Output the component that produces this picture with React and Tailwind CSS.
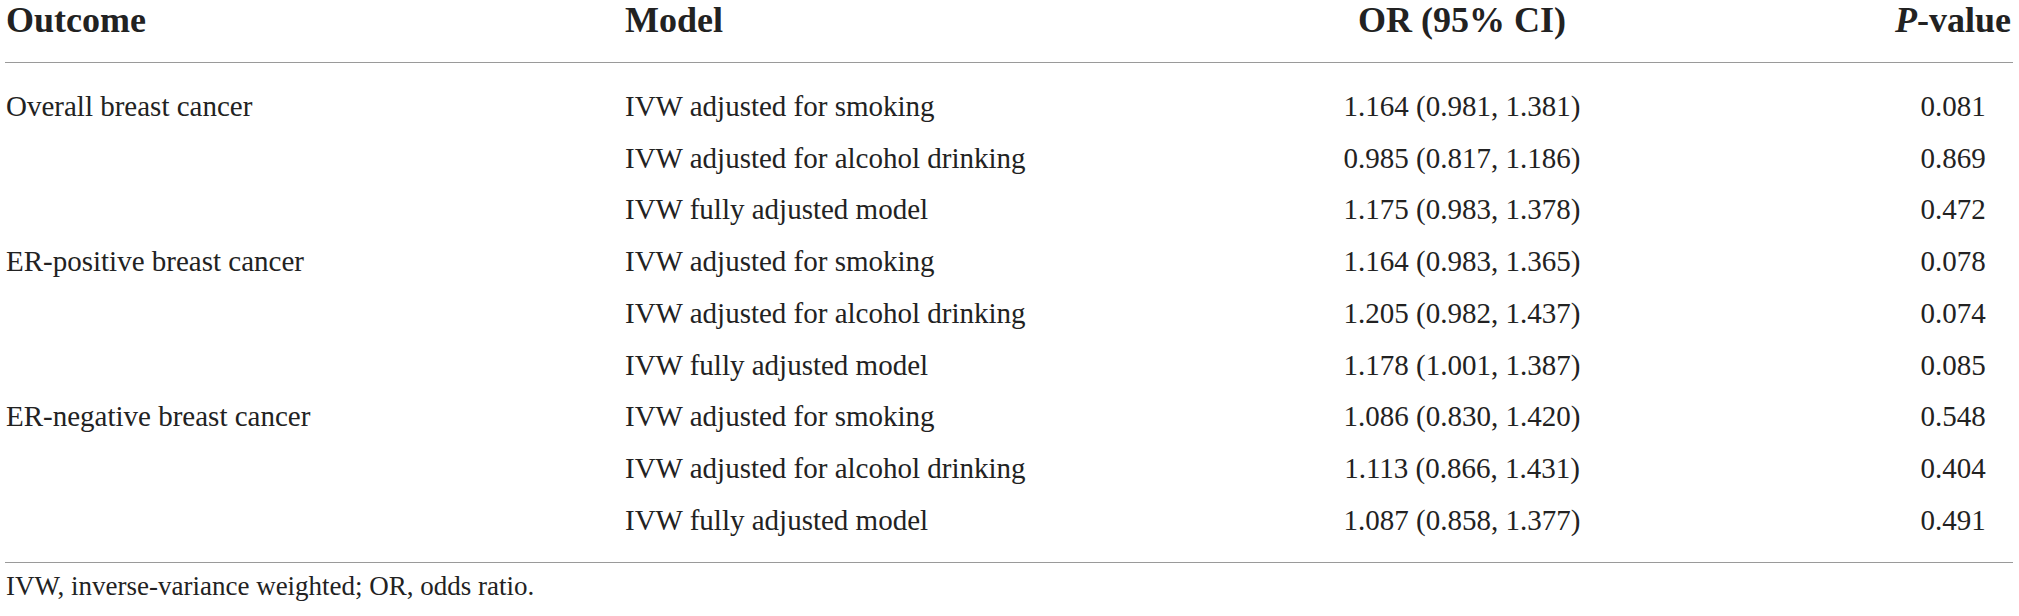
const rows = [
    { outcome: "Overall breast cancer", model: "IVW adjusted for smoking", or: "1.164 (0.981, 1.381)", p: "0.081" },
    { outcome: "", model: "IVW adjusted for alcohol drinking", or: "0.985 (0.817, 1.186)", p: "0.869" },
    { outcome: "", model: "IVW fully adjusted model", or: "1.175 (0.983, 1.378)", p: "0.472" },
    { outcome: "ER-positive breast cancer", model: "IVW adjusted for smoking", or: "1.164 (0.983, 1.365)", p: "0.078" },
    { outcome: "", model: "IVW adjusted for alcohol drinking", or: "1.205 (0.982, 1.437)", p: "0.074" },
    { outcome: "", model: "IVW fully adjusted model", or: "1.178 (1.001, 1.387)", p: "0.085" },
    { outcome: "ER-negative breast cancer", model: "IVW adjusted for smoking", or: "1.086 (0.830, 1.420)", p: "0.548" },
    { outcome: "", model: "IVW adjusted for alcohol drinking", or: "1.113 (0.866, 1.431)", p: "0.404" },
    { outcome: "", model: "IVW fully adjusted model", or: "1.087 (0.858, 1.377)", p: "0.491" },
];

const cols = "grid grid-cols-[619px_638px_400px_351px]";

function App() {
    return (
        <div className="w-[2019px] h-[616px] bg-white text-[#222] font-['Liberation_Serif',serif] overflow-hidden">
            <div className="ml-[5px] w-[2008px]">
                <div className={`${cols} text-[36px] leading-[40px] font-bold pb-[22px] border-b border-[#9a9a9a]`}>
                    <div className="pl-[1px]">Outcome</div>
                    <div className="pl-[1px]">Model</div>
                    <div className="text-center">OR (95% CI)</div>
                    <div className="pl-[231px] text-center">
                        <i>P</i>-value
                    </div>
                </div>
                <div className="pt-[18px] pb-[16px] border-b border-[#9a9a9a] text-[29px] leading-[51.7px]">
                    {rows.map((r, i) => (
                        <div key={i} className={cols}>
                            <div className="pl-[1px]">{r.outcome}</div>
                            <div className="pl-[1px]">{r.model}</div>
                            <div className="text-center">{r.or}</div>
                            <div className="pl-[231px] text-center">{r.p}</div>
                        </div>
                    ))}
                </div>
                <p className="mt-[5px] pl-[1px] text-[27px] leading-[36px]">
                    IVW, inverse-variance weighted; OR, odds ratio.
                </p>
            </div>
        </div>
    );
}

export default App;
